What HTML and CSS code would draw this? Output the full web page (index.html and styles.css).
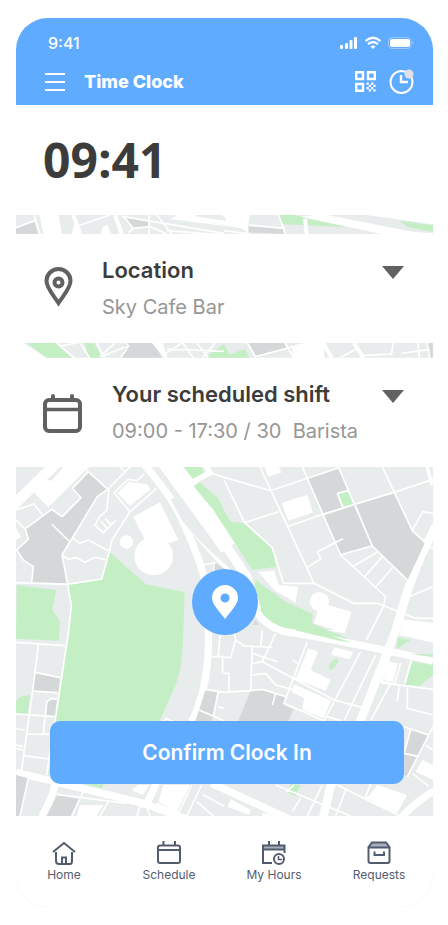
FILE: index.html
```
<!DOCTYPE html>
<html lang="en">
<head>
    <meta charset="UTF-8">
    <meta name="viewport" content="width=device-width, initial-scale=1.0">
    <title>Time Clock</title>
    <link rel="stylesheet" href="styles.css">
</head>
<body>
    <div class="phone">
        <header class="header">
            <div class="status-bar">
                <span class="status-time">9:41</span>
                <svg class="status-icons" viewBox="0 0 74 14" width="74" height="14" aria-hidden="true">
                    <g fill="#fff">
                        <rect x="0" y="9" width="3" height="4" rx="1"/>
                        <rect x="5" y="7" width="3" height="6" rx="1"/>
                        <rect x="9.500" y="4" width="3" height="9" rx="1"/>
                        <rect x="14" y="1" width="3" height="12" rx="1"/>
                        <path d="M30.500 10.500 L33 13 L35.500 10.500 Q33 8.500 30.500 10.500Z"/>
                        <rect x="50" y="3" width="20" height="8" rx="2"/>
                    </g>
                    <path d="M25.500 5 Q33 -1.500 40.500 5 M28 8.200 Q33 4 38 8.200" fill="none" stroke="#fff" stroke-width="2.200"/>
                    <rect x="48.500" y="1.500" width="22.500" height="11" rx="3.500" fill="none" stroke="#fff" stroke-opacity=".35"/>
                    <path d="M72.500 5 Q74.500 7 72.500 9Z" fill="#fff" fill-opacity=".4"/>
                </svg>
            </div>
            <div class="title-bar">
                <button class="icon-btn" aria-label="Menu">
                    <svg viewBox="0 0 20 20" width="20" height="20">
                        <path d="M0 2H20M0 10H20M0 18H20" stroke="#fff" stroke-width="2"/>
                    </svg>
                </button>
                <h1>Time Clock</h1>
                <button class="icon-btn" aria-label="Scan QR code">
                    <svg viewBox="0 0 21 21" width="21" height="21">
                        <path d="M1.200 1.200H8V8H1.200ZM13 1.200H19.800V8H13ZM1.200 13H8V19.800H1.200Z" fill="none" stroke="#fff" stroke-width="2.400"/>
                        <path fill="#fff" d="M11.500 11.500h2.300v2.300h-2.300zM16 11.500h2.300v2.300H16zM13.800 13.800H16V16h-2.200zM18.300 13.800h2.300V16h-2.300zM11.500 16h2.300v2.300h-2.300zM16 16h2.300v2.300H16zM13.800 18.300H16v2.300h-2.200zM18.300 18.300h2.300v2.300h-2.300z"/>
                    </svg>
                </button>
                <button class="icon-btn" aria-label="Clock status">
                    <svg viewBox="0 0 25 25" width="25" height="25">
                        <circle cx="12.500" cy="13" r="11" fill="none" stroke="#fff" stroke-width="2"/>
                        <path d="M12 6V13H19" fill="none" stroke="#fff" stroke-width="2.400"/>
                        <circle cx="20" cy="5" r="4.500" fill="#dfe1e5"/>
                    </svg>
                </button>
            </div>
        </header>

        <main>
            <time class="clock">09:41</time>

            <svg class="map" viewBox="48 285 1251 57" aria-hidden="true">
                <path class="land" d="M48 285H1299V342H48Z"/>
                <path class="block" d="M48 325L102 303L114 342H48ZM372 290L447 302V325L400 324ZM746 319L850 327L855 342L746 337Z"/>
                <path class="park" d="M838 285H880L1050 322L846 313Z"/>
                <path class="road" d="M118 285L130 342H240L222 313L216 342H186L176 285Z"/>
                <path class="road" d="M302 342L308 322L322 314L332 342ZM510 297L526 290V280H586L588 300L736 327L745 285H670L690 320Z"/>
                <path class="lane wide" d="M220 285L240 342M345 285L365 342M586 295L735 318M915 296L920 342"/>
                <path class="lane" d="M48 323L110 300M102 285L120 342M235 317L330 285M365 289L672 340M372 290L400 325L385 338M400 325L450 320L500 342M470 285L516 342M447 285V342M500 332L672 345M742 285V342M746 315L855 325M836 285L856 342M672 332L750 342"/>
                <path class="lane wide" d="M660 275L735 325L745 285"/>
                <path class="road" d="M966 285L1160 342H1299V285Z"/>
                <path class="land" d="M1100 285L1299 313V340L1240 336L966 285Z"/>
                <path class="road" d="M966 283H972L1240 336L1299 342H1145L900 290Z"/>
                <path class="park" d="M1200 302L1299 316V336L1222 322Z"/>
                <path class="road" d="M1100 281H1299V312Z"/>
            </svg>

            <button class="card" aria-expanded="false">
                <svg class="card-icon" viewBox="0 0 29 40" width="29" height="40">
                    <path d="M14.500 36C10 29 2.500 21 2.500 14A12 12 0 0 1 26.500 14C26.500 21 19 29 14.500 36Z" fill="none" stroke="#616161" stroke-width="4"/>
                    <circle cx="14.500" cy="15.500" r="4" fill="none" stroke="#616161" stroke-width="4"/>
                </svg>
                <span class="card-text">
                    <span class="card-title">Location</span>
                    <span class="card-value">Sky Cafe Bar</span>
                </span>
                <svg class="caret" viewBox="0 0 22 13" width="22" height="13"><path d="M0 0H22L11 13Z" fill="#616161"/></svg>
            </button>

            <svg class="map" viewBox="48 9 1251 44" aria-hidden="true">
                <path class="land" d="M62 9H1299V53H132Z"/>
                <path class="park" d="M78 9H165L215 53H140ZM255 9H282L306 53H266ZM625 45L672 12L688 44L735 26L748 53H625Z"/>
                <path class="block" d="M376 9H462L486 53H365ZM746 9H852L862 24L770 53ZM1284 9H1299V53H1290Z"/>
                <path class="road" d="M456 9H488L503 53H492ZM875 25L918 9H970L974 53H882Z"/>
                <path class="lane wide" d="M970 9L995 53M1062 9L1090 53"/>
                <path class="lane" d="M66 9L134 53M170 9L222 53M180 18L232 9M240 9L268 53M290 9L312 53M300 50L345 9M300 50L385 18L376 9M362 53L385 18M495 42L545 9M548 9L580 53M500 27L672 34M590 9L625 53M608 53L645 9M742 9L768 53M768 50L920 9M855 9L882 53M1020 53L1075 25M1085 47L1175 42L1180 9M1205 40L1290 28M1254 9L1258 53M1282 9L1290 53"/>
            </svg>

            <button class="card shift" aria-expanded="false">
                <svg class="card-icon" viewBox="0 0 39 40" width="39" height="40">
                    <rect x="2" y="6" width="35" height="31" rx="4" fill="none" stroke="#616161" stroke-width="4"/>
                    <path d="M3 15.500H36" stroke="#616161" stroke-width="3.500"/>
                    <path d="M10 2V6M29 2V6" stroke="#616161" stroke-width="4" stroke-linecap="round"/>
                </svg>
                <span class="card-text">
                    <span class="card-title">Your scheduled shift</span>
                    <span class="card-value">09:00 - 17:30 / 30&nbsp; Barista</span>
                </span>
                <svg class="caret" viewBox="0 0 22 13" width="22" height="13"><path d="M0 0H22L11 13Z" fill="#616161"/></svg>
            </button>

            <section class="map-panel" aria-label="Clock in location">
                <svg class="map" viewBox="48 21 1251 1047" aria-hidden="true">
                    <path class="land" d="M48 21H1299V1068H48Z"/>

                    <!-- parks -->
                    <path class="park" d="M328 275L438 373L554 397L549 540Q546 640 520 690L478 783C400 860 330 920 305 985L145 945L165 783L205 520L214 437L204 375L305 357Z"/>
                    <path class="park" d="M50 375L168 390L158 450L180 485L176 542L48 536ZM48 722Q65 704 90 706L82 762L48 760Z"/>
                    <path class="park" d="M767 360L857 425L939 462L934 490L1042 535L1057 548L880 510L797 490L755 420Z"/>

                    <!-- north west -->
                    <path class="block" d="M265 35L323 88L292 110L186 285L200 370L95 366L100 320L70 300L50 270L85 238L75 205L155 148L187 170L243 113L217 85Z"/>
                    <path class="road" d="M103 98L133 58L155 62L190 21H267L145 142ZM48 105L135 21H180L48 150ZM352 100L385 66L440 72L452 88L390 138ZM400 170L480 127L535 240L505 250L435 240ZM48 205L64 232L48 240Z"/>
                    <circle class="road" cx="461" cy="288" r="58"/>
                    <circle class="road" cx="379" cy="246" r="20"/>
                    <path class="lane" d="M48 368L200 373L305 357L328 275L335 242L390 155L470 85M48 150L102 132L128 165M48 180L75 207L155 148L187 170L243 113L217 85L265 35L323 88L390 21M75 205L85 238L50 270L70 300L100 320L95 366M265 35L250 21M360 21L375 36M327 88L320 152L300 168L285 195L310 218L348 180M303 185L320 203M316 176L333 194M323 88L292 110L186 285L203 373L214 437L205 520L165 783L140 945M155 192L207 243M220 235L240 250L265 240L325 272M186 285L205 298L228 292L255 307L285 292L322 300M390 155L342 98L385 58L410 62L432 43M595 318L645 308L640 340"/>

                    <!-- main roads -->
                    <path class="street" stroke-width="22" d="M430 10C480 70 530 130 560 210C600 300 625 370 625 450V560Q622 690 575 785"/>
                    <path class="street" stroke-width="62" d="M500 0L610 150L690 260"/>
                    <path class="street" stroke-width="28" d="M670 245L740 350L770 450"/>
                    <path class="street" stroke-width="12" d="M525 130Q570 220 690 335"/>
                    <path class="land" d="M512 118L528 112L570 180L672 290V310Q590 240 545 180Z"/>
                    <path class="street" stroke-width="22" d="M755 420Q775 490 850 514Q1050 545 1299 603"/>
                    <path class="street" stroke-width="26" d="M1312 190Q1245 310 1205 450Q1190 510 1165 570L1080 785L990 985L970 1070"/>
                    <path class="street" stroke-width="22" d="M48 937L430 1030L580 1085M165 970Q160 1010 125 1070M470 970L440 1030M635 970L885 1085"/>
                    <path class="park" d="M550 21H605L612 38L580 58ZM580 78L600 68L655 115L672 150L692 185L732 190L817 263L829 320L757 330L640 150Z"/>
                    <path class="street" stroke-width="16" d="M570 70L630 38L615 15"/>
                    <path class="lane" d="M630 38L672 52"/>
                    <path class="block" d="M645 308L680 330V350H640Z"/>

                    <!-- north east -->
                    <g transform="translate(672 0)">
                        <path class="block" d="M248 55L345 25L372 92L340 100L355 143L295 162ZM298 168L395 135L443 258L347 285ZM397 133L510 97L565 212L602 250L550 362L445 258ZM85 495L95 480L105 495Z"/>
                        <path class="park" d="M343 102L375 93L388 132L357 142Z"/>
                        <path class="road" d="M172 128L250 105L267 158L193 182ZM122 21H165L172 38L132 50ZM102 335L150 332L165 375L222 380L215 428L150 390ZM312 435L383 455L362 520L270 490L283 445ZM537 478L627 488V540L528 525Z"/>
                        <circle class="road" cx="286" cy="425" r="29"/>
                        <path class="lane" d="M0 52L140 92L345 23M0 60L62 188L165 155M108 21L270 370H178L145 263L62 188M190 200L295 163L510 97L627 58M235 21L350 285L485 410L478 440L427 540M345 25L390 130L445 258L552 362M340 100L357 143M340 100L372 92M475 21L565 212L627 268M270 370L390 430H460L575 475H627M250 322L290 297L280 275L357 236M347 285L443 258M385 320L460 277M420 352L475 290M455 382L505 323M565 210L597 155L627 160M555 410L627 380"/>
                        <path class="street" stroke-width="10" d="M608 15L624 75"/>
                    </g>

                    <!-- south west -->
                    <g transform="translate(0 510)">
                        <path class="block" d="M105 130L180 145L175 187L98 182ZM140 255L142 218L155 208L170 210L165 258ZM48 435L85 445L60 558H48ZM172 495L240 508L215 558H140ZM617 178L655 183L640 260L630 275H585L597 240Z"/>
                        <path class="road" d="M395 480L415 465H448L428 495ZM490 465H570L530 548L475 515ZM240 525L310 525L290 558H230Z"/>
                        <path class="lane" d="M48 37L195 47M115 45L98 183L65 420M108 127L180 143M98 183L172 188M48 252L165 260M130 310L140 215L155 205L170 207M80 312L155 313M48 297L75 300M48 345L70 350M48 355L70 360M72 377L148 387M85 445L60 558M170 493L380 520M250 485L215 558M325 515L300 558M615 178L672 187M597 240L672 272M655 183L640 260M660 15L655 80M635 80H672M668 80V130M655 230L672 235M490 275L498 265L520 275M470 520L535 552L575 465M605 465L560 558M590 515L640 558M610 495L672 528M412 558L418 530L440 530L450 558"/>
                    </g>

                    <!-- south east -->
                    <g transform="translate(672 510)">
                        <path class="block" d="M80 182L115 178L185 200L180 225L208 238L192 275H42ZM560 300L613 315L585 380L540 370ZM540 373L580 382L550 440L540 435Z"/>
                        <path class="park" d="M210 0H270L385 38L350 33ZM520 22L560 30L518 57ZM560 72H627V82ZM565 95L627 105V135L585 168L543 165ZM200 462L230 465L215 498L187 485Z"/>
                        <ellipse class="park" cx="328" cy="103" rx="9" ry="19" transform="rotate(38 328 103)"/>
                        <path class="road" d="M253 55L282 65L260 120L320 150L305 182L215 148ZM210 163L322 212L298 265L235 240L240 205L203 185ZM330 52L387 65L378 88L322 75ZM495 95L522 100L507 157L478 150ZM530 0H627V38L525 15ZM595 390L627 405V450L575 425ZM460 465L550 495L520 548L430 505ZM20 508L80 540L75 555L10 530ZM115 548L160 558H115ZM305 0H365L360 10Z"/>
                        <path class="lane" d="M0 187L80 182L115 178L185 200M85 45L80 180M30 0L35 30L60 48L145 52M35 30L20 82H0M115 0L110 50M155 10L115 95L85 100M85 70L160 95M85 135L125 130L155 165L205 178M250 35L180 220L300 272M410 65L300 272M455 75L360 272M115 95L330 210L415 232M0 130H15V185M205 90L222 100M155 190L145 225M310 260L350 272M470 158L627 178M500 160L440 272M495 88L473 155L512 162L530 98M562 90L543 160M525 170L520 215M550 172V235L627 255M540 290L613 315M560 300L540 370L585 380M627 290L580 382L550 440M605 345L627 360M565 430L615 470M365 480L335 558M340 465L470 530L530 558M295 465L250 558M155 465L380 558M440 462L425 500L515 550M210 465L187 485M230 505L205 545"/>
                        <path class="street" stroke-width="22" d="M645 475Q590 500 530 565"/>
                    </g>
                </svg>
                <div class="map-overlay">
                    <svg class="pin" viewBox="0 0 66 66" width="66" height="66" role="img" aria-label="You are here">
                        <circle cx="33" cy="33" r="33" fill="#5fabff"/>
                        <path d="M33 50C27 42 20 35 20 29A13 13 0 0 1 46 29C46 35 39 42 33 50ZM33 24.500A4.500 4.500 0 1 0 33 33.500A4.500 4.500 0 1 0 33 24.500Z" fill="#fff" fill-rule="evenodd"/>
                    </svg>
                    <button class="confirm-btn">Confirm Clock In</button>
                </div>
            </section>
        </main>

        <nav class="tab-bar">
            <a class="tab" href="#home">
                <svg viewBox="0 0 24 24" width="24" height="24">
                    <path d="M1 11L12 2L23 11M4 11V20Q4 23 7 23H18Q20 23 20 20V11M10 23V16.500H14V23" fill="none" stroke="#535c6e" stroke-width="2"/>
                </svg>
                Home
            </a>
            <a class="tab" href="#schedule">
                <svg viewBox="0 0 24 24" width="24" height="24">
                    <path d="M3 4.500H21Q23 4.500 23 6.500V20Q23 22 21 22H3Q1 22 1 20V6.500Q1 4.500 3 4.500ZM1 9H23M6.500 0V4M18 0V4" fill="none" stroke="#535c6e" stroke-width="2"/>
                </svg>
                Schedule
            </a>
            <a class="tab" href="#hours">
                <svg viewBox="0 0 24 24" width="24" height="24">
                    <path d="M1 4.500H22.500V8H1Z" fill="#a9aebb"/>
                    <path d="M10 22H1V4.500H22.500V12M1 8.500H23M7 0V4M17 0V4" fill="none" stroke="#535c6e" stroke-width="2"/>
                    <circle cx="17" cy="18" r="5" fill="none" stroke="#535c6e" stroke-width="2"/>
                    <path d="M16.500 15V18.500H20" fill="none" stroke="#535c6e" stroke-width="1.500"/>
                </svg>
                My Hours
            </a>
            <a class="tab" href="#requests">
                <svg viewBox="0 0 24 24" width="24" height="24">
                    <path d="M5 2H19L22 6H2Z" fill="#a9aebb"/>
                    <path d="M5 1.500H19L22.500 6V20Q22.500 22 20.500 22H3.500Q1.500 22 1.500 20V6ZM1.500 6.500H22.500M7.500 10.500V14H17V10.500" fill="none" stroke="#535c6e" stroke-width="2"/>
                </svg>
                Requests
            </a>
        </nav>
    </div>
</body>
</html>
```
FILE: styles.css
```
* {
    box-sizing: border-box;
}
body {
    margin: 0;
    padding: 18px 15px 18px 16px;
    background-color: #fff;
    color: #3c3c3b;
    font-family: Inter, "Open Sans", sans-serif;
}
button {
    padding: 0;
    border: none;
    background: none;
    color: inherit;
    font-family: inherit;
    cursor: pointer;
}
svg {
    display: block;
    flex-shrink: 0;
}
.phone {
    overflow: hidden;
    border-radius: 32px;
    background-color: #fff;
    box-shadow: 0 0 1px rgba(0, 0, 0, 0.1);
}
.header {
    padding: 15px 19px 11px 29px;
    background-color: #5fabff;
    color: #fff;
}
.status-bar {
    display: flex;
    justify-content: space-between;
    align-items: center;
    height: 20px;
    padding: 0 0 0 3px;
}
.status-time {
    font-size: 16px;
    font-weight: 500;
}
.title-bar {
    display: flex;
    align-items: center;
    height: 41px;
    padding-top: 16px;
    gap: 13px;
}
.title-bar h1 {
    flex: 1;
    margin: 0 0 0 6px;
    font-size: 18px;
    font-weight: 800;
    line-height: 24px;
}
.clock {
    display: block;
    padding: 25px 27px;
    font-family: "Open Sans", sans-serif;
    font-size: 48px;
    font-weight: 700;
    line-height: 60px;
}
.map {
    width: 100%;
    height: auto;
}
.land {
    fill: #e8ecec;
}
.block {
    fill: #d4d8d9;
}
.park {
    fill: #c4efc5;
}
.road {
    fill: #fff;
}
.lane, .street {
    fill: none;
    stroke: #fff;
}
.lane {
    stroke-width: 5;
}
.lane.wide {
    stroke-width: 12;
}
.card {
    display: flex;
    align-items: flex-start;
    width: 100%;
    padding: 21px 29px 21px 28px;
    gap: 29px;
    text-align: left;
}
.card-icon {
    margin-top: 12px;
}
.card.shift {
    padding-left: 27px;
    gap: 30px;
}
.shift .card-icon {
    margin-top: 15px;
}
.card-text {
    flex: 1;
    min-width: 0;
}
.card-title, .card-value {
    display: block;
    white-space: nowrap;
}
.card-title {
    margin-bottom: 7px;
    font-size: 22px;
    font-weight: 600;
    line-height: 30px;
}
.card-value {
    color: #969696;
    font-size: 20px;
    line-height: 30px;
}
.caret {
    margin-top: 11px;
}
.map-panel {
    display: grid;
}
.map-panel > * {
    grid-area: 1 / 1;
}
.map-overlay {
    display: flex;
    flex-direction: column;
    align-items: center;
    justify-content: flex-end;
    padding: 0 29px 32px 34px;
    gap: 86px;
}
.pin {
    margin-right: 5px;
}
.confirm-btn {
    width: 100%;
    height: 63px;
    border-radius: 10px;
    background-color: #5fabff;
    color: #fff;
    font-size: 21px;
    font-weight: 600;
}
.tab-bar {
    display: flex;
    justify-content: space-between;
    padding: 25px 21px 24px 15px;
}
.tab {
    display: flex;
    flex-direction: column;
    align-items: center;
    width: 66px;
    gap: 2px;
    color: #535c6e;
    font-size: 12px;
    line-height: 16px;
    text-decoration: none;
    white-space: nowrap;
}
```
